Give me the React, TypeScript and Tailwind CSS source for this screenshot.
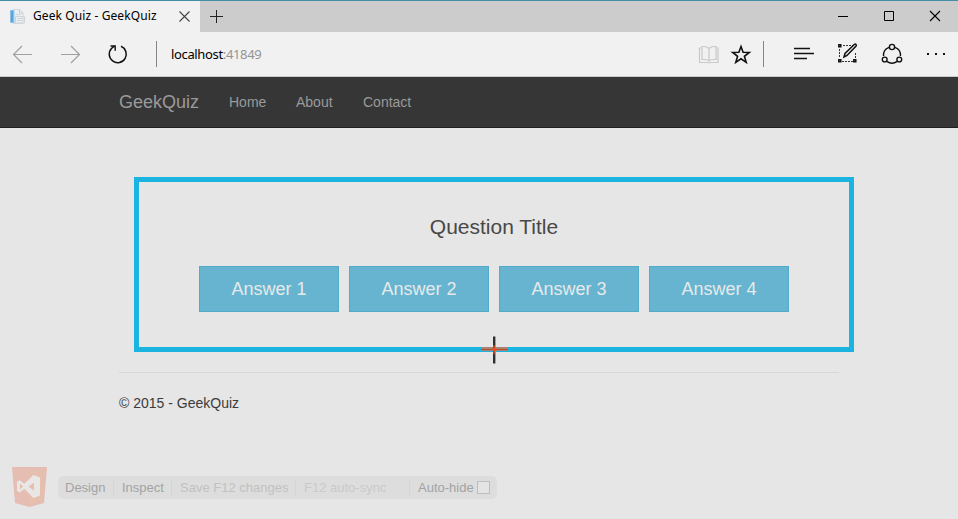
import React from "react";

const links = [
  { label: "Home", cls: "ml-[30px] w-[67px]" },
  { label: "About", cls: "w-[67px]" },
  { label: "Contact", cls: "" },
];
const answers = ["Answer 1", "Answer 2", "Answer 3", "Answer 4"];

function PageIcon() {
  return (
    <svg className="ml-[9px] mt-[7px] h-[17px] w-[17px] shrink-0" viewBox="0 0 17 17" fill="none">
      <path d="M4 1.5h6.5l3.5 3v11H4z" fill="#eceff2" stroke="#d3d8dd" />
      <path d="M10.5 1.5v3.5H14" stroke="#c5cbd2" />
      <path d="M6.5 6.5h5M6.5 8.5h9v6.500h-9zM8 10.500h6M8 12.500h6" stroke="#cfd4d9" />
      <path d="M1.500 2.500h3v12h-3z" fill="#56a5dc" stroke="#8dc1e5" />
      <path d="M5.500 1.500v13" stroke="#c1dbed" />
    </svg>
  );
}

function TitleBar() {
  return (
    <header className="flex h-8 border-t border-[#468da7] bg-[#cccccc]">
      <div className="flex w-[200px] bg-[#f1f1f1]">
        <PageIcon />
        <span className="ml-[7px] mt-[7px] w-[127px] whitespace-nowrap text-[12px] leading-[16px] tracking-[0.1px] text-black">Geek Quiz - GeekQuiz</span>
        <svg className="ml-[19px] mt-[10px] h-[11px] w-[11px]" viewBox="0 0 11 11" stroke="#444" strokeWidth="1.100">
          <path d="M.5.5l10 10M10.500.5l-10 10" />
        </svg>
      </div>
      <svg className="ml-[10px] mt-[9px] h-[13px] w-[13px]" viewBox="0 0 13 13" stroke="#222">
        <path d="M6.500 0v13M0 6.500h13" />
      </svg>
      <svg className="ml-auto mr-[17px] mt-[9px] h-[12px] w-[103px]" viewBox="0 0 103 12" fill="none" stroke="#000">
        <path d="M0 6.500h10M46.500 1.500h9v9h-9z" />
        <path d="M92 1l10 10M102 1l-10 10" strokeWidth="1.100" />
      </svg>
    </header>
  );
}

function AddressBar() {
  return (
    <div className="flex h-[45px] border-b border-[#c9cccd] bg-[#f1f1f1]">
      <svg className="h-11 w-[160px] shrink-0" viewBox="0 32 160 44" fill="none">
        <path d="M32 54.500H13.500M22 46l-8.500 8.500L22 63M61 54.500h18.500M71 46l8.500 8.500L71 63" stroke="#a0a0a0" strokeWidth="1.200" />
        <path d="M121 46.300A8.500 8.500 0 1 1 111.700 48.200L114.500 46.100" stroke="#111" strokeWidth="1.500" />
        <path d="M110.500 46h4.700v4.700" stroke="#111" strokeWidth="1.400" />
        <path d="M156.500 41v26" stroke="#858585" />
      </svg>
      <span className="ml-[11px] mt-[13px] whitespace-nowrap text-[13px] leading-[18px] tracking-[-0.35px] text-black">
        localhost<span className="text-[#949494]">:41849</span>
      </span>
      <svg className="ml-auto h-11 w-[268px] shrink-0" viewBox="690 32 268 44" fill="none">
        <g stroke="#c9c9c9" strokeWidth="1.200">
          <path d="M709 48.500c-1.500-1.500-3-2-5-2h-2v13h3c2 0 3 .5 4 1.500 1-1 2-1.500 4-1.500h3v-13h-2c-2 0-3.500.5-5 2zM709 48.500v13" />
          <path d="M701.500 48h-2v14.500h7.500l2 .5 2-.5h7V48h-2" />
        </g>
        <path d="M741 46.500l2.100 5.800 6.200.2-4.900 3.800 1.800 6-5.200-3.500-5.200 3.500 1.800-6-4.900-3.800 6.200-.2z" stroke="#111" strokeWidth="1.600" />
        <path d="M763.500 41v26" stroke="#858585" />
        <path d="M794 48.500h16M794 53.500h20M794 58.500h13" stroke="#111" strokeWidth="1.300" />
        <path d="M843 45.500h10M839.500 49v9M842 61.500h11M855.500 53v6" stroke="#333" strokeDasharray="2 1" />
        <g stroke="#111" strokeWidth="1.500">
          <path d="M838.800 44.800h2v2h-2zM838.800 59.800h2v2h-2zM853.800 59.800h2v2h-2z" />
          <path d="M844 57l1-3.500 9.500-9.200c1.200-.7 2.300.4 1.600 1.700L847 55.500z" />
        </g>
        <g stroke="#111" strokeWidth="1.400">
          <path d="M889 47.300a8.500 8.500 0 0 0-5.500 8.700M895 47.300a8.500 8.500 0 0 1 5.500 8.700M886.800 61.400c3.200 2.200 7.200 2.200 10.400 0" />
          <circle cx="892" cy="47" r="2.600" />
          <circle cx="884.700" cy="59.500" r="2.400" />
          <circle cx="899.300" cy="59.500" r="2.400" />
        </g>
        <path d="M927 53h2v2h-2zM935 53h2v2h-2zM943 53h2v2h-2z" fill="#111" />
      </svg>
    </div>
  );
}

function DevToolbar() {
  return (
    <div className="ml-3 mt-[54px] flex h-10 items-start">
      <svg className="h-10 w-[35px]" viewBox="0 0 35 40">
        <path d="M0 0h35l-3 36-14.500 4L3 36z" fill="#e5bdb2" />
        <path d="M17.500 3H32l-2.600 31-11.900 3.300z" fill="#e5c0ae" />
        <path fillRule="evenodd" d="M21.500 8l6.500 2.500v18L21.500 31l-9.200-9.200-4.500 3.700L5 24V14.500l2.800-1.300 4.500 3.600zM22 15.500l-5.500 4 5.500 4.200zM8 16.500v6l3-3z" fill="#e9e7e6" />
      </svg>
      <div className="ml-[11px] mt-[9px] flex h-[23px] w-[439px] items-center whitespace-nowrap rounded-[5px] bg-[#dddddd] pl-[7px] text-[13px] leading-[23px] text-[#a3a3a3]">
        <span className="w-[48px]">Design</span>
        <span className="w-[58px] border-l border-[#d5d5d5] pl-2 leading-4">Inspect</span>
        <span className="w-[124px] border-l border-[#d5d5d5] pl-2 leading-4 text-[#c1c1c1]">Save F12 changes</span>
        <span className="w-[114px] border-l border-[#d5d5d5] pl-2 leading-4 text-[#cacaca]">F12 auto-sync</span>
        <span className="border-l border-[#d5d5d5] pl-2 leading-4">Auto-hide</span>
        <span className="ml-[3px] h-[13px] w-[13px] border border-[#bdbdbd] bg-[#e4e4e4]" />
      </div>
    </div>
  );
}

export default function App() {
  return (
    <div className="flex h-[519px] w-[958px] flex-col overflow-hidden bg-[#e6e6e6] font-['Liberation_Sans',Arial,sans-serif]">
      <div className="font-['Noto_Sans','Open_Sans',sans-serif]">
        <TitleBar />
        <AddressBar />
      </div>
      <nav className="flex h-[51px] items-center border-b border-[#221f20] bg-[#363636] pl-[119px] text-[14px] text-[#9a9a9a]">
        <span className="w-20 text-[18px]">GeekQuiz</span>
        {links.map((link) => (
          <a key={link.label} className={link.cls}>{link.label}</a>
        ))}
      </nav>
      <main className="relative ml-[134px] mt-[49px] h-[175px] w-[720px] shrink-0 border-[5px] border-[#1bb3df]">
        <h1 className="mt-[31px] text-center text-[21px] leading-[28px] text-[#484848]">Question Title</h1>
        <div className="mt-[25px] flex justify-center gap-[10px]">
          {answers.map((answer) => (
            <button key={answer} className="h-[46px] w-[140px] border border-[#50acc9] bg-[#66b4cf] text-[18px] text-[#e6e9ea]">{answer}</button>
          ))}
        </div>
        <svg className="absolute left-[342px] top-[154px] h-[28px] w-[28px]" viewBox="0 0 28 28">
          <path d="M0 13h27" stroke="#a98474" strokeWidth="4" />
          <path d="M0 13.500h27" stroke="#bb492c" />
          <path d="M13 .5v27" stroke="#303030" strokeWidth="2" />
          <path d="M14.500.5v27" stroke="#9d9d9d" />
          <path d="M13 9v9" stroke="#a54327" strokeWidth="2" />
          <circle cx="13.500" cy="13.500" r="2" fill="#e94d20" />
        </svg>
      </main>
      <footer className="ml-[119px] mt-5 w-[720px] border-t border-[#d8d8d8] pt-5 text-[14px] leading-5 text-[#3b3b3b]">© 2015 - GeekQuiz</footer>
      <DevToolbar />
    </div>
  );
}
